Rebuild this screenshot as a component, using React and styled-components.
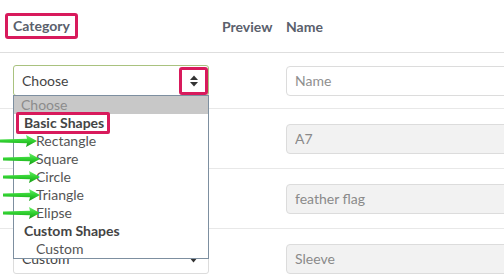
import React from "react";
import styled, { createGlobalStyle } from "styled-components";

const GlobalStyle = createGlobalStyle`
  body {
    margin: 0;
    background: #fff;
    font-family: Lato, "Open Sans", sans-serif;
    overflow: hidden;
  }
`;

const MARK = "#d81a5c";

const Table = styled.div`
  width: 600px;
`;

const Row = styled.div`
  display: grid;
  grid-template-columns: 209px 64px 1fr;
  align-items: center;
  height: ${(p) => p.$h}px;
  border-bottom: 1px solid ${(p) => (p.$head ? "#dedede" : "#e8e8e8")};
`;

const Cell = styled.div`
  position: relative;
  padding-left: 13px;
  display: flex;
  align-items: center;
`;

const HeadText = styled.span`
  font-size: 14px;
  font-weight: 700;
  color: #5a606c;
`;

const Marked = styled.span`
  display: inline-block;
  margin-left: -8px;
  padding: 1px 5px 2px;
  border: 3px solid ${MARK};
  border-radius: 3px;
`;

const Select = styled.div`
  position: relative;
  box-sizing: border-box;
  width: 196px;
  height: ${(p) => (p.$active ? 31 : 30)}px;
  border: 1px solid ${(p) => (p.$active ? "#a9c27f" : "#dcdcdc")};
  border-radius: 3px;
  display: flex;
  align-items: center;
  justify-content: space-between;
  padding-left: 8px;
  font-size: 14px;
  color: #444;
`;

const ArrowBox = styled.span`
  box-sizing: border-box;
  width: 29px;
  height: 28px;
  border: 3px solid ${MARK};
  border-radius: 3px;
  display: flex;
  align-items: center;
  justify-content: center;
`;

const Caret = styled.span`
  width: 29px;
  display: flex;
  justify-content: center;
  padding-top: 2px;
`;

const List = styled.div`
  position: absolute;
  top: 100%;
  left: -1px;
  width: 196px;
  box-sizing: border-box;
  border: 1px solid #7d8fa0;
  background: #fff;
  z-index: 2;
`;

const Option = styled.div`
  position: relative;
  height: 18px;
  line-height: 18px;
  font-size: 14px;
  padding-left: ${(p) => (p.$group ? 10 : p.$indent ? 22 : 7)}px;
  font-weight: ${(p) => (p.$group ? 700 : 400)};
  color: ${(p) => (p.$selected ? "#8c8c8c" : p.$group ? "#444" : "#555")};
  background: ${(p) => (p.$selected ? "#c8c8c8" : "transparent")};
  white-space: nowrap;
`;

const GroupMark = styled.span`
  position: relative;
  &::after {
    content: "";
    position: absolute;
    left: -8px;
    right: -6px;
    top: -2px;
    bottom: -3px;
    border: 3px solid ${MARK};
    border-radius: 2px;
  }
`;

const Pointer = styled.svg`
  position: absolute;
  left: ${(p) => p.$x}px;
  top: 2px;
`;

const Input = styled.input`
  box-sizing: border-box;
  width: 260px;
  height: 30px;
  border: 1px solid #dcdcdc;
  border-radius: 4px;
  padding: 0 8px;
  font-family: Lato, "Open Sans", sans-serif;
  font-size: 14px;
  color: #8a8a8a;
  background: ${(p) => (p.disabled ? "#f2f2f2" : "#fff")};
  outline: none;
  &::placeholder {
    color: #8f8f8f;
  }
`;

const UpDown = () => (
  <svg width="8" height="12" viewBox="0 0 8 12">
    <path d="M0 5 L4 0.5 L8 5 Z" fill="#333" />
    <path d="M0 7 L4 11.5 L8 7 Z" fill="#333" />
  </svg>
);

const Down = () => (
  <svg width="9" height="6" viewBox="0 0 9 6">
    <path d="M0 0 L9 0 L4.5 5.5 Z" fill="#333" />
  </svg>
);

const GreenArrow = ({ x }) => (
  <Pointer $x={x} width="40" height="14" viewBox="0 0 40 14">
    <defs>
      <linearGradient id="ga" x1="0" y1="0" x2="0" y2="1">
        <stop offset="0" stopColor="#6af06a" />
        <stop offset="0.5" stopColor="#2fd02f" />
        <stop offset="1" stopColor="#169a16" />
      </linearGradient>
    </defs>
    <path d="M0 5.5 L27 4.8 L26 1 L37 7 L26 13 L27 9.2 L0 8.5 Z" fill="url(#ga)" />
  </Pointer>
);

const basic = ["Rectangle", "Square", "Circle", "Triangle", "Elipse"];

const rows = [
  { shape: "Rectangle", name: "A7" },
  { shape: "Triangle", name: "feather flag" },
  { shape: "Custom", name: "Sleeve" },
];

export default function App() {
  return (
    <>
      <GlobalStyle />
      <Table>
        <Row $h={52} $head>
          <Cell>
            <HeadText>
              <Marked>Category</Marked>
            </HeadText>
          </Cell>
          <Cell>
            <HeadText>Preview</HeadText>
          </Cell>
          <Cell>
            <HeadText>Name</HeadText>
          </Cell>
        </Row>
        <Row $h={55}>
          <Cell>
            <Select $active>
              Choose
              <ArrowBox>
                <UpDown />
              </ArrowBox>
              <List>
                <Option $selected>Choose</Option>
                <Option $group>
                  <GroupMark>Basic Shapes</GroupMark>
                </Option>
                {basic.map((s, i) => (
                  <Option key={s} $indent>
                    <GreenArrow x={i === 0 ? -14 : -11} />
                    {s}
                  </Option>
                ))}
                <Option $group>Custom Shapes</Option>
                <Option $indent>Custom</Option>
              </List>
            </Select>
          </Cell>
          <Cell />
          <Cell>
            <Input placeholder="Name" />
          </Cell>
        </Row>
        {rows.map((r) => (
          <Row key={r.name} $h={59}>
            <Cell>
              <Select>
                {r.shape}
                <Caret>
                  <Down />
                </Caret>
              </Select>
            </Cell>
            <Cell />
            <Cell>
              <Input disabled value={r.name} readOnly />
            </Cell>
          </Row>
        ))}
      </Table>
    </>
  );
}
